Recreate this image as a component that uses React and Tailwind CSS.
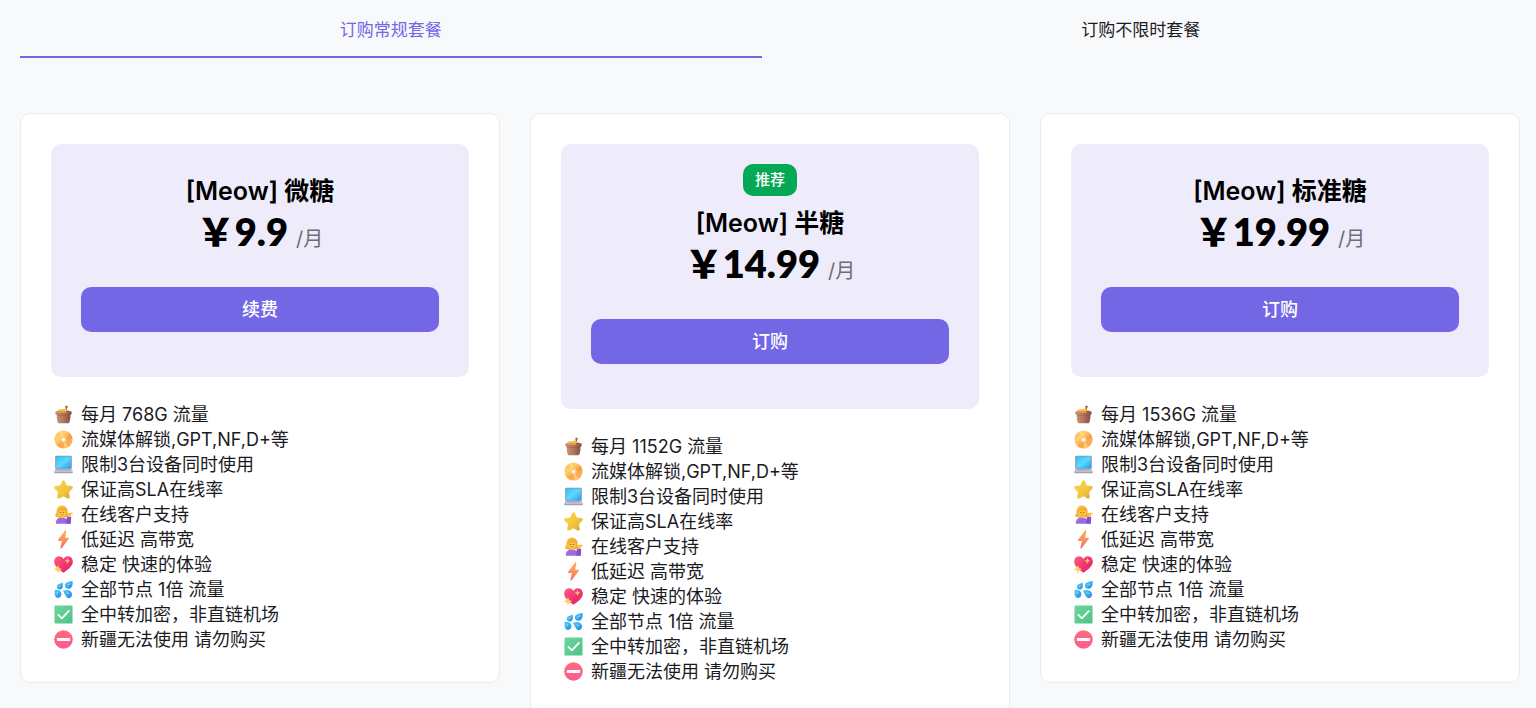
import { useState } from "react";

const plans = [
  { name: '[Meow] 微糖', price: '9.9', traffic: '768G', action: '续费' },
  { name: '[Meow] 半糖', price: '14.99', traffic: '1152G', action: '订购', recommended: true },
  { name: '[Meow] 标准糖', price: '19.99', traffic: '1536G', action: '订购' },
];

const tabs = ['订购常规套餐', '订购不限时套餐'];

const features = [
  ['disc', '流媒体解锁,GPT,NF,D+等'],
  ['laptop', '限制3台设备同时使用'],
  ['star', '保证高SLA在线率'],
  ['person', '在线客户支持'],
  ['bolt', '低延迟 高带宽'],
  ['heart', '稳定 快速的体验'],
  ['drops', '全部节点 1倍 流量'],
  ['check', '全中转加密，非直链机场'],
  ['stop', '新疆无法使用 请勿购买'],
];

//gradients shared by all the feature icons
function IconDefs() {
  return (
    <svg className="absolute size-0" aria-hidden="true">
      <defs>
        <linearGradient id="pot" x1="0" y1="0" x2="1" y2="0">
          <stop offset="0" stopColor="#c99275" />
          <stop offset="0.5" stopColor="#b0745c" />
          <stop offset="1" stopColor="#85504c" />
        </linearGradient>
        <linearGradient id="disc" x1="0" y1="0" x2="1" y2="1">
          <stop offset="0" stopColor="#ffb648" />
          <stop offset="0.35" stopColor="#ffd06e" />
          <stop offset="0.55" stopColor="#f9a64a" />
          <stop offset="1" stopColor="#ffb95c" />
        </linearGradient>
        <linearGradient id="screen" x1="0" y1="0" x2="1" y2="1">
          <stop offset="0" stopColor="#2fc4f5" />
          <stop offset="0.5" stopColor="#5bd8ff" />
          <stop offset="1" stopColor="#2a9df0" />
        </linearGradient>
        <linearGradient id="star" x1="0" y1="0" x2="1" y2="1">
          <stop offset="0" stopColor="#fbd950" />
          <stop offset="0.6" stopColor="#f0c43c" />
          <stop offset="1" stopColor="#d89c38" />
        </linearGradient>
        <linearGradient id="hair" x1="0" y1="0" x2="1" y2="1">
          <stop offset="0" stopColor="#ffcf4a" />
          <stop offset="1" stopColor="#e99a35" />
        </linearGradient>
        <linearGradient id="bolt" x1="0" y1="0" x2="0" y2="1">
          <stop offset="0" stopColor="#ffb04e" />
          <stop offset="0.55" stopColor="#fb9060" />
          <stop offset="1" stopColor="#f2647a" />
        </linearGradient>
        <linearGradient id="heart" x1="0" y1="0" x2="1" y2="1">
          <stop offset="0" stopColor="#ff5f86" />
          <stop offset="0.6" stopColor="#ee2f6e" />
          <stop offset="1" stopColor="#cf2a8a" />
        </linearGradient>
        <linearGradient id="drop" x1="0" y1="0" x2="1" y2="1">
          <stop offset="0" stopColor="#5fd0ff" />
          <stop offset="1" stopColor="#1c86e0" />
        </linearGradient>
        <linearGradient id="check" x1="0" y1="0" x2="1" y2="1">
          <stop offset="0" stopColor="#6fd69c" />
          <stop offset="1" stopColor="#4bc488" />
        </linearGradient>
        <linearGradient id="stop" x1="0" y1="0" x2="0" y2="1">
          <stop offset="0" stopColor="#ff6a78" />
          <stop offset="1" stopColor="#fb5c92" />
        </linearGradient>
      </defs>
    </svg>
  );
}

const icons = {
  pot: (
    <>
      <path d="M12.6 6.5 13.2 1.6" stroke="#8d5a45" strokeWidth="1.4" strokeLinecap="round" />
      <ellipse cx="13.2" cy="1.9" rx="1.4" ry="1.1" fill="#9a6248" />
      <path d="M3.5 7C4 4.4 6 4.2 7.5 4.8 9 3.6 12 3.6 13 4.8c2-.4 3 .6 3 2.2Z" fill="#f6bf45" />
      <path d="M2.8 9.5C2.8 13.5 3.2 19.2 5 19.2h10c1.8 0 2.4-5.7 2.4-9.7Z" fill="url(#pot)" />
      <rect x="1.4" y="6.2" width="17.2" height="4.4" rx="1.8" fill="url(#pot)" />
      <path d="M3.5 6.5h9c.8 2-.8 2.6-1.6 1.2-.8 1.2-2.6.8-3 0-1 .9-3.6.2-4.4-1.2Z" fill="#eda83c" />
      <path d="M3.3 10.9h13.6" stroke="#6f3f3f" strokeOpacity=".4" strokeWidth=".7" />
    </>
  ),
  disc: (
    <>
      <circle cx="10" cy="10" r="9.6" fill="url(#disc)" />
      <path d="M10 10 5 2A9.6 9.6 0 0 1 9 .5ZM10 10l5 8a9.6 9.6 0 0 1-4 1.5Z" fill="#ffe28f" opacity=".6" />
      <path d="M10 10 17.8 5a9.3 9.3 0 0 1 1.5 4Z" fill="#ef8f45" opacity=".4" />
      <circle cx="10" cy="10" r="3.4" fill="#ffc983" />
      <circle cx="10" cy="10" r="1.6" fill="#fff" />
    </>
  ),
  laptop: (
    <>
      <rect x="1.3" y=".8" width="17.4" height="14" rx="1" fill="#8093ad" />
      <rect x="2.3" y="1.7" width="15.4" height="12" rx=".4" fill="url(#screen)" />
      <path d="M1.3 14.4h17.4l1.1 3H.2Z" fill="#c3c8d8" />
      <path d="M3 15.1h14M2.7 16.1h14.6" stroke="#8f93ab" strokeWidth=".5" />
      <path d="M.2 17.3h19.6v1c0 .5-.4.8-.9.8H1.1c-.5 0-.9-.3-.9-.8Z" fill="#a49fbd" />
    </>
  ),
  star: (
    <path
      d="M8.7 1c.5-1.1 2.1-1.1 2.6 0l2.2 4.8 4.9.6c1.4.2 1.9 1.7.9 2.7l-3.5 3.6.8 5.1c.2 1.3-1.1 2.2-2.3 1.6L10 17l-4.3 2.4c-1.2.6-2.5-.3-2.3-1.6l.8-5.1L.7 9.1C-.3 8.1.2 6.6 1.6 6.4l4.9-.6Z"
      fill="url(#star)"
    />
  ),
  person: (
    <>
      <path d="M2.6 8.3C2 3.6 4.5.4 8.3.4s6.5 3.2 5.9 7.4c-.1 2 .5 3.8-.4 5.2H3C.8 12.6.7 9.8 2.6 8.3Z" fill="url(#hair)" />
      <path d="M1.9 19.8c0-4.4 2.4-6.8 6-6.8 2.8 0 4.4 1 5.2 2.3l1.4-3.6 3.6 1.1-.6 7Z" fill="#9b6be0" />
      <path d="M13 15.3v4.5h4.5l.6-7-3.6-1.1Z" fill="#8450cf" />
      <path d="M6.7 11h3.2v2.4c-.9 1-2.3 1-3.2 0Z" fill="#f2a93c" />
      <ellipse cx="8.6" cy="8.2" rx="3.9" ry="4.4" fill="#ffc843" />
      <path d="M4.3 8.4C5.4 7.7 6 6.4 6.2 5c1.4 1.2 4 1.4 6.2 1L11.2 3 7 2.4 4.3 5Z" fill="#f4ac37" />
      <circle cx="7.2" cy="8" r=".55" fill="#5a3540" />
      <circle cx="10.2" cy="8" r=".55" fill="#5a3540" />
      <path d="M7.4 10.1c.8.6 1.6.6 2.4 0" fill="none" stroke="#b33f4a" strokeWidth=".6" />
      <path d="M13.4 9.2c1-.9 2.4-1.3 6-.9.9.2.8 1.5-.1 1.5l-1.6.1c.6 1.3 0 2.5-1.3 2.7-1.7.3-3.4-1-3-3.4Z" fill="#ffbf3d" />
    </>
  ),
  bolt: (
    <path
      d="M11.5.8 4.3 10.3c-.4.6-.1 1.2.6 1.2h3.4L6.8 18.8c-.2.9.7 1.2 1.3.5l7.3-9.9c.4-.6.1-1.2-.6-1.2h-3.1L13 1.3c.2-.9-.9-1.3-1.5-.5Z"
      fill="url(#bolt)"
    />
  ),
  heart: (
    <>
      <path d="M10 4.2C8.8 2.2 7.2 1.2 5.3 1.3 2.1 1.5 0 4.2.2 7.4.5 12.3 6.4 16 10 18.8c3.6-2.8 9.5-6.5 9.8-11.4.2-3.2-1.9-5.9-5.1-6.1-1.9-.1-3.5.9-4.7 2.9Z" fill="url(#heart)" />
      <path d="m14.2 2.9.9 2.4 2.4.9-2.4.9-.9 2.4-.9-2.4-2.4-.9 2.4-.9Z" fill="#ffc169" />
      <path d="m4.2 10.6 1.3 3.2 3.2 1.3-3.2 1.3-1.3 3.2-1.3-3.2-3.2-1.3 3.2-1.3Z" fill="#ffcf57" />
    </>
  ),
  drops: (
    <>
      <path d="M19.5.8c.5 4.3-.4 8-3.8 8.4-2.5.3-4.6-1.4-4.3-3.9.4-3.2 4.4-3.2 8.1-4.5Z" fill="url(#drop)" />
      <path d="M8.9 2.7c.9 3.8.5 6.8-2.3 7.3-2 .4-3.6-.9-3.6-2.9 0-2.8 3.1-2.9 5.9-4.4Z" fill="url(#drop)" />
      <path d="M.6 10.4c3.8-.5 7 .9 7.2 4.4.1 2.4-1.6 4.2-3.7 4.1C.6 18.7.3 14.1.6 10.4Z" fill="url(#drop)" />
      <path d="M9.2 11.2c3.4-1.2 7.3-1.1 9 1.5 1.4 2.1.8 4.9-1.1 6-3.7 2.1-5.8-4.2-7.9-7.5Z" fill="url(#drop)" />
      <path d="M14 5.6c.6-1 1.6-1.2 2.7-1.5M4.9 7.2c.5-.8 1-.9 1.8-1.2M3 14.2c0-.9.3-1.3 1-1.4M13.6 13.6c.9-.2 1.6.1 2.1.8" fill="none" stroke="#b5ecff" strokeWidth=".9" strokeLinecap="round" />
    </>
  ),
  check: (
    <>
      <rect x=".5" y=".5" width="19" height="19" rx="1" fill="url(#check)" />
      <path d="m4.6 10.3 3.7 3.7 7.4-7.8" fill="none" stroke="#fff" strokeWidth="1.9" strokeLinecap="round" strokeLinejoin="round" />
    </>
  ),
  stop: (
    <>
      <circle cx="10" cy="10" r="9.8" fill="url(#stop)" />
      <rect x="3" y="8.4" width="14" height="3.2" rx=".8" fill="#fff" />
    </>
  ),
};

function Feature({ icon, children }) {
  return (
    <li className="flex h-[25px] items-center gap-[5px]">
      <span className="flex w-[25px] justify-center">
        <svg viewBox="0 0 20 20" className="size-[19px]" fill="none" aria-hidden="true">{icons[icon]}</svg>
      </span>
      <span className="whitespace-nowrap">{children}</span>
    </li>
  );
}

function PlanCard({ plan }) {
  return (
    <div className="rounded-[10px] border border-[#e9ebee] bg-white p-[30px]">
      <div className="flex flex-col items-center rounded-[10px] bg-[#eeecfb] px-[30px] pt-5 pb-[45px]">
        {plan.recommended && (
          <span className="rounded-[10px] bg-[#04a855] px-3 text-[15px] leading-8 font-medium text-white">推荐</span>
        )}
        <h2 className="mt-3 text-[25px] leading-[30px] font-semibold text-black">{plan.name}</h2>
        <p className="h-[51px] leading-[51px] text-black">
          <span className="font-[Lato,'Noto_Sans_CJK_SC',sans-serif] text-[38px] font-extrabold">￥{plan.price}</span>
          <span className="ml-2 text-[20px] text-[#6c6d75]">/月</span>
        </p>
        <button className="mt-[30px] h-[45px] w-full rounded-[10px] bg-[#7367e6] font-medium text-white">
          {plan.action}
        </button>
      </div>
      <ul className="mt-[25px]">
        <Feature icon="pot">每月 {plan.traffic} 流量</Feature>
        {features.map(([icon, text]) => (
          <Feature key={icon} icon={icon}>{text}</Feature>
        ))}
      </ul>
    </div>
  );
}

export default function App() {
  const [active, setActive] = useState(0);

  return (
    <div className="min-h-screen bg-[#f8f9fb] pr-4 pb-5 pl-5 font-[Inter,'Noto_Sans_CJK_SC',sans-serif] text-[18px] text-[#1b1b1f]">
      <IconDefs />
      <div className="mb-[55px] flex text-[17px]" role="tablist">
        {tabs.map((tab, i) => (
          <button
            key={tab}
            role="tab"
            aria-selected={active === i}
            onClick={() => setActive(i)}
            className={`h-[58px] flex-auto border-b-2 pt-1 leading-[25px] ${active === i ? 'border-[#7367e6] text-[#7367e6]' : 'border-transparent'}`}
          >
            {tab}
          </button>
        ))}
      </div>
      <div className="grid grid-cols-3 items-start gap-[30px]">
        {plans.map((plan) => (
          <PlanCard key={plan.name} plan={plan} />
        ))}
      </div>
    </div>
  );
}
